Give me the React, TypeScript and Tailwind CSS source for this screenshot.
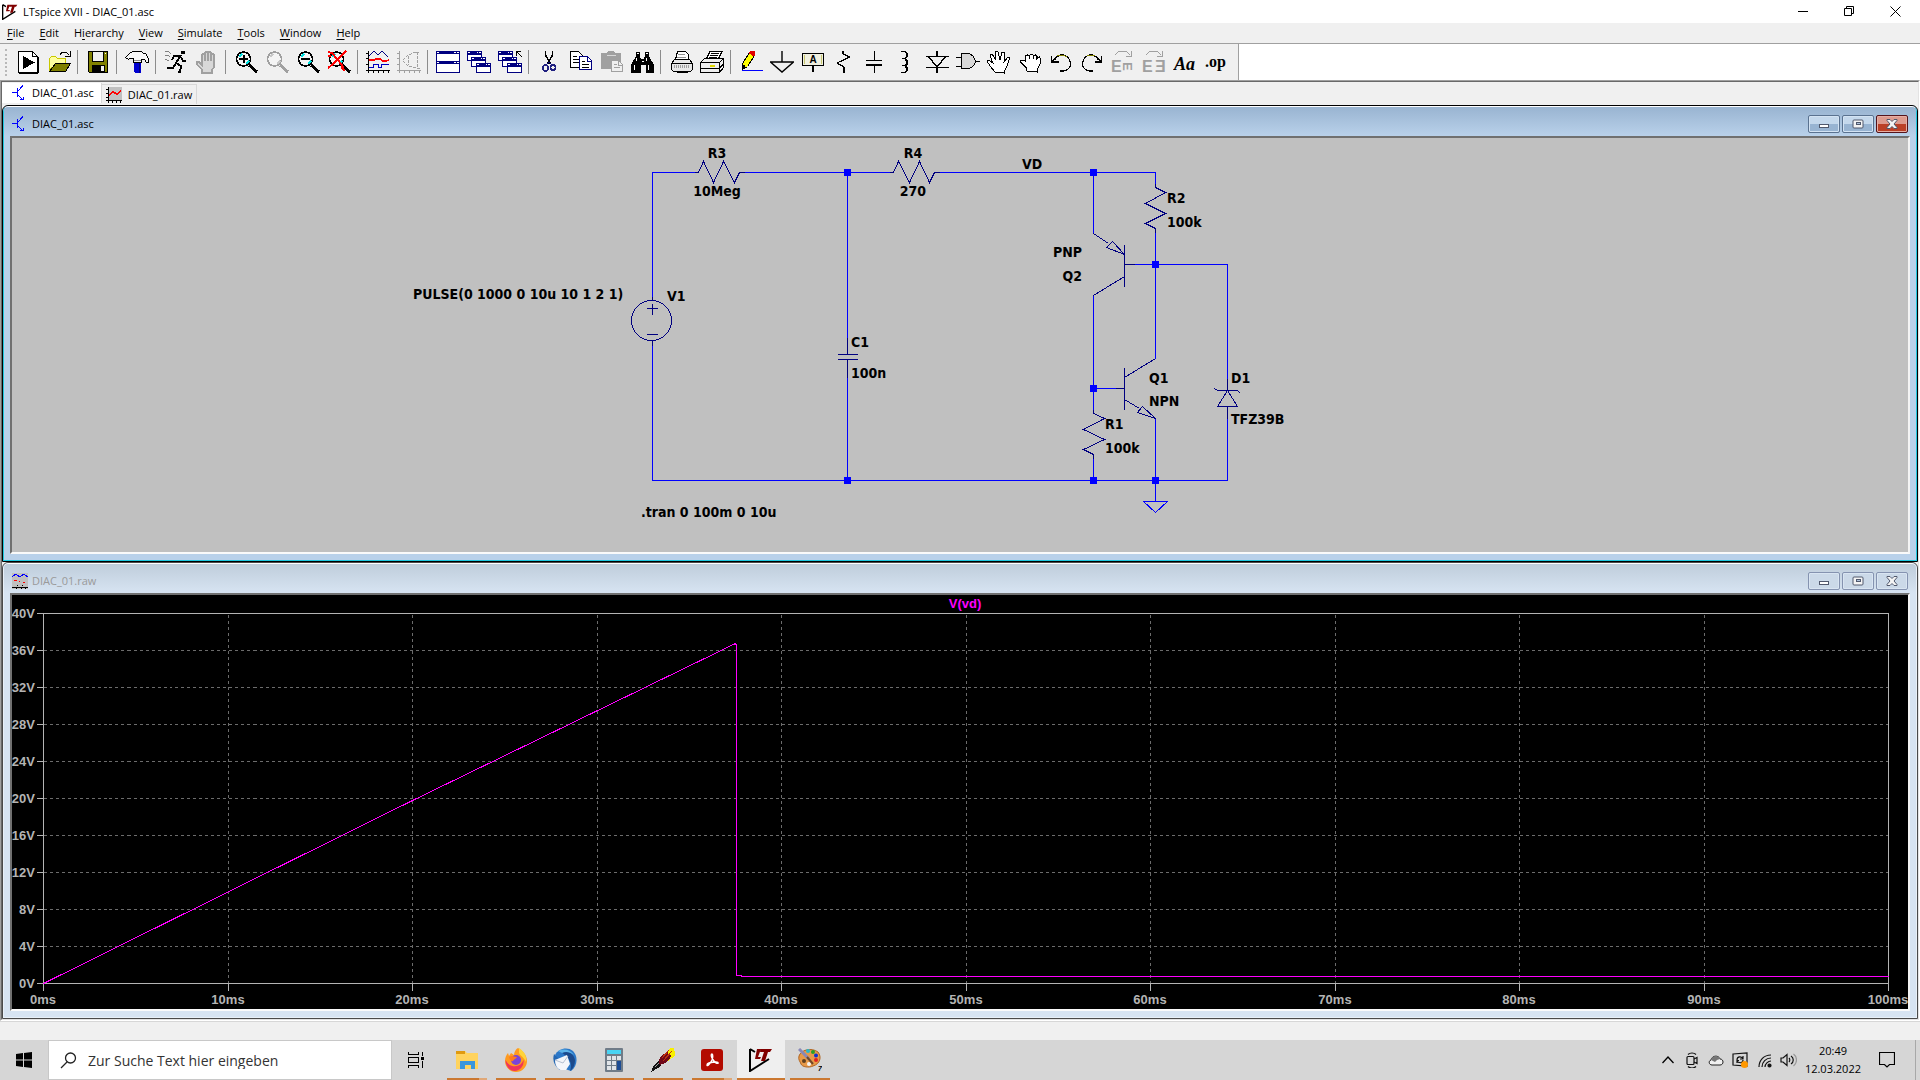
import React, {useState} from 'react';

type IconProps = { children: React.ReactNode };

const Icon: React.FC<IconProps> = ({children}) => (
    <svg viewBox="0 0 24 24" className="w-6 h-6" fill="none" stroke="#000" shapeRendering="crispEdges">
        {children}
    </svg>
);

const Lens: React.FC<{ color: string; glass: string; handle: string }> = ({color, glass, handle}) => (
    <>
        <path d="M15 15l8 7" stroke={handle} strokeWidth="3"/>
        <circle cx="9.5" cy="9" r="7" fill="#f4f4f4" stroke={color} strokeWidth="1.6"/>
        <path d="M5 7l3-3M12 14l3-3" stroke={glass} strokeWidth="2"/>
    </>
);

const MiniWindow: React.FC<{ x: number; y: number }> = ({x, y}) => (
    <>
        <rect x={x + 0.5} y={y + 0.5} width="14" height="9" fill="#fff" stroke="#000080"/>
        <rect x={x} y={y} width="15" height="4" fill="#000080" stroke="none"/>
        <path d={`M${x + 1} ${y + 1.5}h2M${x + 10} ${y + 1.5}h1M${x + 12} ${y + 1.5}h2`} stroke="#fff"/>
    </>
);

const handPath = 'M7 23v-3l-5-6v-2h2l3 3V5l1-1h1l1 1v6V3l1-1h1l1 1v8V3l1-1h1l1 1v8V5l1-1h1l1 1v12l-2 3v3z';

const toolGroups: { label: string; icon: React.ReactNode }[][] = [
    [
        {
            label: 'Run',
            icon: <><path d="M2.5 1.5h14l5 5v16h-19z" fill="#fff"/><path d="M16.5 1.5v5h5M3 23.5h19M22 7v16"/><path d="M7 6v13l12-6.5z" fill="#000" stroke="none"/></>,
        },
        {
            label: 'Open',
            icon: <><path d="M2.5 20V8.5l2-2h4l2 2h8v5h-9z" fill="#ffffa0" stroke="#c8c800"/><path d="M2.5 21.5l6-8h15l-5 8z" fill="#808000"/><path d="M13 5l2-3h4l3 3M23 1v5h-5"/></>,
        },
    ],
    [
        {
            label: 'Save',
            icon: <><path d="M2.5 1.5h19v21h-18l-1-1z" fill="#808000"/><rect x="6.5" y="1.5" width="11" height="10" fill="#efefef"/><rect x="6" y="15" width="13" height="7" fill="#000" stroke="none"/><rect x="15" y="16" width="3" height="5" fill="#efefef" stroke="none"/><path d="M19.5 3v1" stroke="#fff"/></>,
        },
    ],
    [
        {
            label: 'Control Panel',
            icon: <><path d="M9 13h7v9l-1 1h-5l-1-1z" fill="#0000d0" stroke="none"/><path d="M14.5 13v10" stroke="#000080"/><path d="M.5 7.5l5-5 3-1h8l2 2h2l3 5v4h-2l-2-3h-3v3h-8v-4h-4l-1 1z" fill="#f8f8f8"/><path d="M9 10h7" stroke="#909090"/></>,
        },
    ],
    [
        {
            label: 'Simulate',
            icon: <><circle cx="19" cy="2.5" r="1.5" fill="#000"/><path d="M17 5l-5 8 5 3-1 6h-2M12 13l-3 5H3" strokeWidth="2"/><path d="M16 6h-6l-2 4M17 7l2 4h3" strokeWidth="1.5"/><path d="M1 1h3l3 3M1 5h3l2 2M1 9l4 2" stroke="#808080"/></>,
        },
        {label: 'Halt', icon: <path d={handPath} fill="#d8d8d8" stroke="#a0a0a0" strokeWidth="1.5"/>},
    ],
    [
        {label: 'Zoom in', icon: <><Lens color="#000" glass="#00e0e0" handle="#000"/><path d="M9.5 5v8M5 9h9" strokeWidth="2"/></>},
        {label: 'Pan', icon: <Lens color="#a0a0a0" glass="#c8c8c8" handle="#a0a0a0"/>},
        {label: 'Zoom out', icon: <><Lens color="#000" glass="#00e0e0" handle="#000"/><path d="M5 9h9" strokeWidth="2"/></>},
        {
            label: 'Zoom full extents',
            icon: <><Lens color="#000" glass="#00e0e0" handle="#000"/><path d="M1 2l4 1 10 12 2 6M19 1l-4 4-9 9-5 4M1 6h3M14 18h3" stroke="#f00" strokeWidth="2"/></>,
        },
    ],
    [
        {
            label: 'Autorange',
            icon: <><path d="M2.5 1v22M0 20.5h24M0 3.5h2M0 8.5h2M0 14.5h2M7.5 21v2M12.5 21v2M17.5 21v2M22.5 21v2"/><path d="M3 6l5-5 4 4 4-4 6 6" stroke="#000080"/><path d="M3 10h5l2-1h4l3 2h3l3-1" stroke="#f00" strokeWidth="1.5"/><path d="M3 17.5h4v-3h5v3h3v-3h8" stroke="#0000c0"/></>,
        },
        {
            label: 'Smith chart',
            icon: <g stroke="#a0a0a0"><path d="M2.5 1v22M0 20.5h24M0 3.5h2M0 8.5h2M0 14.5h2M7.5 21v2M12.5 21v2M17.5 21v2M22.5 21v2"/><path d="M6 10l5-5 8-3h4M6 11l5 5 8 2h4M20.5 2v16M11.5 6v9" strokeDasharray="3 1"/></g>,
        },
    ],
    [
        {
            label: 'Tile windows',
            icon: <><rect x=".5" y="1.5" width="23" height="10" fill="#fff" stroke="#000080"/><rect x=".5" y="11.5" width="23" height="11" fill="#fff" stroke="#000080"/><path d="M0 2.5h24M0 12.5h24" stroke="#000080" strokeWidth="3"/><path d="M1 2.5h2M18 2.5h2M21 2.5h2M1 12.5h2M18 12.5h2M21 12.5h2" stroke="#fff"/></>,
        },
        {label: 'Cascade windows', icon: <><MiniWindow x={0} y={1}/><MiniWindow x={4} y={7}/><MiniWindow x={9} y={13}/></>},
        {
            label: 'Close all windows',
            icon: <><MiniWindow x={0} y={1}/><MiniWindow x={4} y={7}/><MiniWindow x={9} y={13}/><path d="M17 0h7v8h-4l-3-3z" fill="#f0f0f0" stroke="none"/><path d="M18 1.5h5M18.5 1v5M19 2l5 5"/></>,
        },
    ],
    [
        {
            label: 'Cut',
            icon: <><path d="M8.5 1v4l5 9M15.5 1v4l-5 9" strokeWidth="1.5"/><path d="M12 12l-3 3M12 12l3 3" stroke="#000080"/><ellipse cx="8.5" cy="18" rx="2.5" ry="3" stroke="#202080" strokeWidth="1.6"/><ellipse cx="16" cy="17.5" rx="2.5" ry="3" stroke="#202080" strokeWidth="1.6"/></>,
        },
        {
            label: 'Copy',
            icon: <><path d="M2.5 1.5h8l4 4v12h-12z" fill="#fff"/><path d="M5 6.5h4M5 9.5h6M5 12.5h6"/><path d="M11.5 6.5h8l4 4v9h-12z" fill="#fff" stroke="#000080"/><path d="M19.5 7v4h4" stroke="#000080"/><path d="M14 11.5h3M14 14.5h7M14 17.5h7"/></>,
        },
        {
            label: 'Paste',
            icon: <><path d="M2 3h6l1-2h6l1 2h6v16H2z" fill="#a0a0a0" stroke="none"/><path d="M8 5.5h9" stroke="#d8d8d8"/><path d="M12.5 10.5h7l4 4v7h-11z" fill="#efefef" stroke="#a0a0a0"/><path d="M15 14.5h3M15 17.5h6M19.5 11v4h4" stroke="#a0a0a0"/></>,
        },
        {
            label: 'Find',
            icon: <><path d="M6 2h4v4l1 3h3l1-3V2h4v4l5 9v8h-8v-8h-5v8H1v-8l5-9z" fill="#000" stroke="none"/><path d="M7 3.5h2M16 3.5h2M6.5 8v3M16.5 8v3M4 15v5M18 15v5M12 11.5h2" stroke="#fff"/></>,
        },
    ],
    [
        {
            label: 'Print',
            icon: <><path d="M6.5 9.5l2-8h8l3 3v5" fill="#fff"/><path d="M9 4h7M8 7h9" stroke="#909090"/><path d="M2.5 13.5l3-4h15l3 4v6l-2 2h-17l-2-2z" fill="#e8e8e8"/><path d="M3 13.5h20M8 22.5h11"/><path d="M5 16.5h16" stroke="#a0a0a0" strokeDasharray="1 1" strokeWidth="3"/></>,
        },
        {
            label: 'Print setup',
            icon: <><path d="M6 9.5l4-8h12l-4 8" fill="#fff"/><path d="M11 3.5h8M10 5.5h8M9 7.5h8"/><path d="M.5 12.5l4-4h19v9l-4 5H.5z" fill="#efefef"/><path d="M.5 12.5h19v10M19.5 12.5l4-4M1 18.5h18l4-4"/><path d="M10 15.5h5" stroke="#e0d800" strokeWidth="2"/></>,
        },
    ],
    [
        {
            label: 'Wire',
            icon: <><path d="M3.5 19.5v-6l7-11 5 3-7 11z" fill="#ff0"/><path d="M3 18h2v-3H3z" fill="#000"/><path d="M10 3l2-2h3l1 3-1 2z" fill="#e00000" stroke="#e00000"/><path d="M3 20.5h21" stroke="#00f"/></>,
        },
        {label: 'Ground', icon: <path d="M12 1v11M.5 12h23L12 22z" strokeWidth="1.4" shapeRendering="auto"/>},
        {
            label: 'Label net',
            icon: <><rect x="1.5" y="3.5" width="21" height="12" fill="#f0f0e0" strokeWidth="1.8"/><path d="M3.5 5v9M20.5 5v9" stroke="#c8c870"/><path d="M12 16v6" strokeWidth="1.5"/><text x="12" y="13" textAnchor="middle" fill="#000" stroke="none" className="font-['Liberation_Sans'] text-[10px] font-bold">A</text></>,
        },
        {label: 'Resistor', icon: <path d="M11 1v3l7 3-13 6 7 4v6" strokeWidth="1.2"/>},
        {label: 'Capacitor', icon: <path d="M11.5 1v9M11.5 15v8M3 10.5h16M3 15h16" strokeWidth="1.8"/>},
        {
            label: 'Inductor',
            icon: <path d="M7 1.5h4l2 2v3l-2 2H8M11 9.500l2 1v4l-2 1H8M11 16.500l2 1v3l-2 2H7" strokeWidth="1.5"/>,
        },
        {label: 'Diode', icon: <path d="M12 1v5M12 17v6M1 6.5h23M3 6.5l9 10 9-10M1 17.5h23" strokeWidth="1.4"/>},
        {
            label: 'Component',
            icon: <><path d="M5.5 3.5h7c4 1 6 4 7 8-1 4-3 6-7 7h-7z" fill="#d8d8d8"/><path d="M0 7.5h5M0 16.5h5M20 11.5h4" strokeWidth="1.6"/></>,
        },
        {
            label: 'Move',
            icon: <path d="M8 22l-5-6-3-5 2-1 4 3-3-7V4h2l4 6-1-8 2-1 1 1 2 8 2-8h2l1 1-1 9 4-5h2l-3 9-3 6v1z" fill="#fff"/>,
        },
        {
            label: 'Drag',
            icon: <path d="M8.5 21v-3l-6-6v-2h2l3 1V6l2-1 2 1 1-2h2l1 2 2-1 2 2v1l2-1 1 2v4l-3 6v3zM11.5 6v3M15.500 6v3M18.500 7v3" fill="#fff"/>,
        },
        {label: 'Undo', icon: <><path d="M6 10c2-6 10-7 14-1 4 7-1 13-9 12" strokeWidth="1.3"/><path d="M8 5h6l4 2" stroke="#808000"/><path d="M2.5 6v6h7M3 11l4-3" strokeWidth="1.5"/></>},
        {label: 'Redo', icon: <><path d="M18 10C16 4 8 3 4 9c-4 7 1 13 9 12" strokeWidth="1.3"/><path d="M7 6l4-1h4" stroke="#808000"/><path d="M21.5 6v6h-7M21 11l-4-3" strokeWidth="1.5"/></>},
        {
            label: 'Rotate',
            icon: <g fill="#a0a0a0" stroke="none" className="font-['Liberation_Sans'] text-[16px] font-bold"><text x="0" y="22">E</text><text transform="translate(12 12) rotate(90)" x="0" y="0" className="text-[13px]">E</text><path d="M4 5l4-4h7l4 4M20 1v5h-5" fill="none" stroke="#a0a0a0"/></g>,
        },
        {
            label: 'Mirror',
            icon: <g fill="#a0a0a0" stroke="none" className="font-['Liberation_Sans'] text-[16px] font-bold"><text x="0" y="22">E</text><text x="13" y="22">Ǝ</text><path d="M4 5l4-4h7l4 4M20 1v5h-5" fill="none" stroke="#a0a0a0"/></g>,
        },
        {
            label: 'Text',
            icon: <text x="1" y="20" fill="#000" stroke="none" className="font-['Liberation_Serif'] text-[18px] font-bold italic">Aa</text>,
        },
        {
            label: 'SPICE directive',
            icon: <text x="1" y="17" fill="#000" stroke="none" className="font-['Liberation_Serif'] text-[16px] font-bold">.op</text>,
        },
    ],
];

const menus = ['File', 'Edit', 'Hierarchy', 'View', 'Simulate', 'Tools', 'Window', 'Help'];
// index of the underlined access key
const accessKey: Record<string, number> = {Hierarchy: 1};

const LtLogo: React.FC<{ className: string }> = ({className}) => (
    <svg viewBox="0 0 24 24" className={className} fill="none">
        <path d="M1 1v22l19-12M1 1l5 3" stroke="#000" strokeWidth="2"/>
        <path d="M8 1l-2 10h5l1-2H9l3-8zM12 1l-1 3h4l-3 9h4l3-9h2l2-3z" fill="#800000"/>
    </svg>
);

const TransistorIcon = () => (
    <svg viewBox="0 0 16 16" className="w-4 h-4" fill="none" stroke="#00f" shapeRendering="crispEdges">
        <path d="M0 7.5h5M10.5 0v1L6 6M6 10l4 4"/>
        <path d="M5.500 3v9" strokeWidth="1.5"/>
        <path d="M8 14.500h3v-3" />
    </svg>
);

const PlotTabIcon = () => (
    <svg viewBox="0 0 16 16" className="w-4 h-4" fill="none" shapeRendering="crispEdges">
        <path d="M2 0h14v13H2z" fill="#c0c0c0"/>
        <path d="M2.5 0v16M0 13.5h16M0 2.5h2M0 6.5h2M0 10.5h2M6.5 14v2M10.5 14v2M14.5 14v2" stroke="#000"/>
        <path d="M3 8l4-3 4 2 4-3" stroke="#f00" strokeWidth="1.5"/>
    </svg>
);

const PlotCaptionIcon = () => (
    <svg viewBox="0 0 16 16" className="w-4 h-4" fill="none" shapeRendering="crispEdges">
        <path d="M0 0h16v16H0z" fill="#c0c0c0"/>
        <path d="M0 4l4-3 4 3 4-3 4 3" stroke="#00f"/>
        <path d="M2 7.5h3M7 8.5h1M11 9.5h2" stroke="#f00"/>
        <path d="M0 14.5h16M5 12.5h1M10 12.5h1M4.5 15v1M9.5 15v1M13.5 15v1" stroke="#000"/>
    </svg>
);

type ChildWindowProps = {
    title: string;
    icon: React.ReactNode;
    active?: boolean;
    children: React.ReactNode;
};

const ChildWindow: React.FC<ChildWindowProps> = ({title, icon, active, children}) => {
    const button = active
        ? 'border-[#5a7290] bg-linear-to-b from-[#c4d8ec] from-50% to-[#98b4d2] to-50% shadow-[inset_0_0_0_1px_#d3e3f3]'
        : 'border-[#8593b0] bg-[#cbd9e8] shadow-[inset_0_0_0_1px_#d9e5f2]';
    const close = active
        ? 'border-[#54141c] bg-linear-to-b from-[#dd9a8e] from-50% to-[#bb4027] to-50% shadow-[inset_0_0_0_1px_#e6aea4]'
        : 'border-[#8593b0] bg-[#cbd9e8] shadow-[inset_0_0_0_1px_#d9e5f2]';

    return (
        <section className={`rounded-t-md border ${active ? 'border-black bg-[#b9d1ea]' : 'border-[#4a4a4a] bg-[#d7e4f2]'}`}>
            <div className={`rounded-t-md border border-t-white ${active ? 'border-[#1fc8e0]' : 'border-[#e8f0f8]'}`}>
                <header
                    className={`flex h-[29px] items-center gap-1 rounded-t pr-2 pl-1.5 bg-linear-to-b ${active ? 'from-[#99b4d1] to-[#b9d1ea]' : 'from-[#bfcddb] to-[#d7e4f2]'}`}>
                    <span className="pt-1 pl-0.5">{icon}</span>
                    <h2 className={`flex-1 pt-1 text-[11px] ${active ? 'text-black' : 'text-[#9a9a9a]'}`}>{title}</h2>
                    <div className="flex gap-0.5 pt-1">
                        <button aria-label="Minimize" className={`flex h-[18px] w-8 items-center justify-center rounded-xs border ${button}`}>
                            <svg viewBox="0 0 12 10" className="h-2.5 w-3"><rect x="1.5" y="5.5" width="9" height="3" fill="#fff" stroke="#50586c"/></svg>
                        </button>
                        <button aria-label="Maximize" className={`flex h-[18px] w-8 items-center justify-center rounded-xs border ${button}`}>
                            <svg viewBox="0 0 12 10" className="h-2.5 w-3"><rect x="1" y="1" width="10" height="8" rx="1" fill="#f4f4f4" stroke="#50586c"/><rect x="4.5" y="3.5" width="4" height="2" fill="#b0c4dc" stroke="#50586c"/></svg>
                        </button>
                        <button aria-label="Close" className={`flex h-[18px] w-8 items-center justify-center rounded-xs border ${close}`}>
                            <svg viewBox="0 0 12 10" className="h-2.5 w-3"><path d="M1 .5h3l2 2 2-2h3v1L8 5l3 3.5v1H8l-2-2-2 2H1v-1L4 5 1 1.5z" fill="#f4f4f4" stroke="#50586c"/></svg>
                        </button>
                    </div>
                </header>
                <div className="px-1.5 pb-1.5">
                    <div className="border-2 border-t-[#707070] border-r-[#f4f4f4] border-b-[#fafafa] border-l-[#707070]">
                        {children}
                    </div>
                </div>
            </div>
        </section>
    );
};

const junctions = [[847, 172], [1093, 172], [1155, 264], [1093, 388], [847, 480], [1093, 480], [1155, 480]];

const schematicText: { x: number; y: number; text: string; anchor?: 'middle' | 'end' }[] = [
    {x: 717, y: 158, text: 'R3', anchor: 'middle'},
    {x: 717, y: 196, text: '10Meg', anchor: 'middle'},
    {x: 913, y: 158, text: 'R4', anchor: 'middle'},
    {x: 913, y: 196, text: '270', anchor: 'middle'},
    {x: 1032, y: 169, text: 'VD', anchor: 'middle'},
    {x: 413, y: 299, text: 'PULSE(0 1000 0 10u 10 1 2 1)'},
    {x: 667, y: 301, text: 'V1'},
    {x: 851, y: 347, text: 'C1'},
    {x: 851, y: 378, text: '100n'},
    {x: 641, y: 517, text: '.tran 0 100m 0 10u'},
    {x: 1167, y: 203, text: 'R2'},
    {x: 1167, y: 227, text: '100k'},
    {x: 1082, y: 257, text: 'PNP', anchor: 'end'},
    {x: 1082, y: 281, text: 'Q2', anchor: 'end'},
    {x: 1149, y: 383, text: 'Q1'},
    {x: 1149, y: 406, text: 'NPN'},
    {x: 1231, y: 383, text: 'D1'},
    {x: 1231, y: 424, text: 'TFZ39B'},
    {x: 1105, y: 429, text: 'R1'},
    {x: 1105, y: 453, text: '100k'},
];

const Schematic = () => (
    <svg viewBox="12 138 1896 414" className="block h-auto w-full bg-[#c0c0c0]" role="img" aria-label="Schematic">
        <g transform="translate(.5 .5)" fill="none" shapeRendering="crispEdges">
            {/* wires */}
            <path
                stroke="#00f"
                d="M652 296V172H694M744 172H889M939 172H1155V183M652 345V480H1227V418M847 172V337M847 377V480M1093 172V233M1155 232V358M1134 264H1227V378M1093 295V409M1093 388H1115M1155 418V501M1093 458V480M1143 501H1167L1155 512Z"
            />
            {/* component symbols */}
            <g stroke="#000080">
                <path d="M694 172h4l5-11 10 21 10-21 11 21 5-10h5"/>
                <path d="M889 172h4l5-11 11 21 10-21 10 21 5-10h5"/>
                <circle cx="651" cy="320" r="20"/>
                <path d="M652 296v4M652 340v5M646 308h11M652 303v11M646 334h11"/>
                <path d="M847 337v17M837 354h20M837 359h20M847 359v18"/>
                <path d="M1155 183v4l10 5-20 11 20 10-20 10 10 5v4"/>
                <path d="M1093 233l15 10M1124 254l-12-13-6 6zM1124 244v42M1124 264h10M1124 276l-31 19"/>
                <path d="M1115 388h9M1124 367v42M1124 377l31-19M1124 399l15 9M1155 418l-13-12-5 6z"/>
                <path d="M1093 409v4l11 5-21 11 21 10-21 10 10 5v4"/>
                <path d="M1227 378v12M1214 388l3 2h20l3 3M1227 390l-10 16h20zM1227 406v12"/>
            </g>
        </g>
        {junctions.map(([x, y]) => (
            <rect key={`${x}-${y}`} x={x - 3} y={y - 3} width="7" height="7" fill="#00f"/>
        ))}
        <g className="font-['DejaVu_Sans_Condensed','DejaVu_Sans',sans-serif] text-[14px] font-bold">
            {schematicText.map((t) => (
                <text key={`${t.x}-${t.y}`} x={t.x} y={t.y} textAnchor={t.anchor}>{t.text}</text>
            ))}
        </g>
    </svg>
);

const xTicks = [43, 228, 412, 597, 781, 966, 1150, 1335, 1519, 1704, 1888];

const Waveform = () => (
    <svg viewBox="12 595 1896 414" className="block h-auto w-full bg-black font-['Liberation_Sans',Arial,sans-serif] text-[13px] font-bold" role="img" aria-label="V(vd)">
        <g transform="translate(.5 .5)" fill="none" shapeRendering="crispEdges">
            <g stroke="#6c6c6c" strokeDasharray="3 3">
                {xTicks.slice(1, -1).map((x) => <path key={x} d={`M${x} 614V983`}/>)}
                {xTicks.slice(1, -1).map((_, i) => <path key={i} d={`M43 ${650 + i * 37}H1888`}/>)}
            </g>
            <g stroke="#b4b4b4">
                <rect x="43" y="613" width="1845" height="370"/>
                {xTicks.map((x) => <path key={x} d={`M${x} 983v7`}/>)}
                {xTicks.map((_, i) => <path key={i} d={`M36 ${613 + i * 37}h7`}/>)}
            </g>
            <path d="M43 983L412 800L735 643L736 645V975H741V976H1888" stroke="#f0f"/>
        </g>
        <g fill="#b4b4b4">
            {xTicks.map((_, i) => (
                <text key={i} x="35" y={618 + i * 37} textAnchor="end">{40 - i * 4}V</text>
            ))}
            {xTicks.map((x, i) => (
                <text key={x} x={x} y="1004" textAnchor="middle">{i * 10}ms</text>
            ))}
        </g>
        <text x="965" y="608" textAnchor="middle" fill="#f0f">V(vd)</text>
    </svg>
);

const taskbarApps: { label: string; active?: boolean; stacked?: boolean; icon: React.ReactNode }[] = [
    {
        label: 'Explorer',
        stacked: true,
        icon: <svg viewBox="0 0 24 24" className="w-6 h-6"><path d="M1 3h9l2 2h11v16H1z" fill="#ffd35e"/><path d="M1 3h9v3H1z" fill="#e09a10"/><path d="M5 21v-8h15v8h-4v-4h-6v4z" fill="#3a96dd"/></svg>,
    },
    {
        label: 'Firefox',
        icon: <svg viewBox="0 0 24 24" className="w-6 h-6"><path d="M14 0c4 2 9 7 9 13a11 11 0 0 1-22 0c0-3 1-6 3-8l1 3 2-3 3 2c0-3 2-6 4-7z" fill="#ff9a1f"/><path d="M1.500 12c2 3 3 5 7 6 5 1 9-1 11-6a9.5 9.5 0 0 1-9 11c-5 0-9-5-9-11z" fill="#f0365a"/><path d="M15 0c6 4 8 9 7 14-2-5-6-6-7-9z" fill="#ffd43a"/><circle cx="12" cy="12" r="5" fill="#7a45d8"/><path d="M5 9c3-2 5 0 8 0-1 2-3 2-4 4-1 1-3 0-4-4z" fill="#ff7a20"/></svg>,
    },
    {
        label: 'Thunderbird',
        icon: <svg viewBox="0 0 24 24" className="w-6 h-6"><path d="M2 7C5 1 14-2 20 3c5 5 5 15-2 20l-9-3z" fill="#2c78c8"/><path d="M8 4c6-2 13 1 14 8 0 5-2 9-5 11 2-5 1-9-2-13-2-3-5-4-7-6z" fill="#1c4a8c"/><path d="M5 3c6-3 13-1 16 4-4-3-8-4-12-2z" fill="#5cb4ea"/><path d="M1 6c-2 7 1 13 6 16l2-8z" fill="#2468b4"/><path d="M2 12l12-5 3 9-4 6H8c-4-1-6-5-6-10z" fill="#f4f6fa"/><path d="M2 12l8 3 5-7" stroke="#b4c0d0" fill="none"/></svg>,
    },
    {
        label: 'Rechner',
        icon: <svg viewBox="0 0 24 24" className="w-6 h-6"><rect x="3" y="0" width="18" height="24" rx="1" fill="#707c88"/><rect x="5" y="2" width="14" height="4" fill="#48d4f4"/><path d="M5 8h4v4H5zM10 8h4v4h-4zM15 8h4v4h-4zM5 13h4v4H5zM10 13h4v4h-4zM5 18h4v4H5zM10 18h4v4h-4z" fill="#e0e4e8"/><path d="M15 13h4v9h-4z" fill="#1c4c94"/></svg>,
    },
    {
        label: 'Feder',
        icon: <svg viewBox="0 0 24 24" className="w-6 h-6" shapeRendering="crispEdges"><path d="M13 6l6-6h4v3h1v5l-7 5z" fill="#f8f000"/><path d="M0 24l3-7 5-5 3 3-2 4z" fill="#111"/><path d="M4 19l4-4" stroke="#a0a0a0"/><path d="M8 14l1-5 7-5 1-1v4l3 0-1 4-5 4-5 2z" fill="#700818"/><path d="M12 13l9-10M11 10l7-8" stroke="#c03010"/></svg>,
    },
    {
        label: 'Acrobat',
        stacked: true,
        icon: <svg viewBox="0 0 24 24" className="w-6 h-6"><rect x="1" y="1" width="22" height="22" rx="3" fill="#b30b00"/><path d="M12 6c-2 0 0 6 4 9 3 1 3-1 0-1-4 0-9 1-9 3s3-1 5-5c1-3 1-6 0-6z" fill="none" stroke="#fff" strokeWidth="1.4"/></svg>,
    },
    {label: 'LTspice', active: true, icon: <LtLogo className="w-6 h-6"/>},
    {
        label: 'Paint',
        icon: <svg viewBox="0 0 24 24" className="w-6 h-6"><path d="M1 8c2-6 12-9 19-4 4 5 2 12-5 14-4 2-11 1-12-2-1-3-3-4-2-8z" fill="#e89a48" stroke="#b06420"/><circle cx="10" cy="3" r="2" fill="#28b8d0"/><circle cx="15" cy="4" r="2" fill="#28a028"/><circle cx="18" cy="7.5" r="2" fill="#1030d0"/><circle cx="18" cy="12" r="2" fill="#e02020"/><circle cx="11" cy="16" r="2" fill="#f4f4f4"/><circle cx="6" cy="13" r="2" fill="#604020"/><path d="M1 1l10 10" stroke="#8888b8" strokeWidth="3"/><path d="M9 9l6 7" stroke="#704828" strokeWidth="2"/><text x="20" y="23" className="font-['Liberation_Sans'] text-[7px] font-bold italic">7</text></svg>,
    },
];

const App: React.FC = () => {
    const [tab, setTab] = useState('asc');
    const [search, setSearch] = useState('');

    return (
        <div className="flex min-h-screen flex-col bg-[#f0f0f0] font-['Open_Sans','Noto_Sans',sans-serif] text-[11px] leading-4 text-black">
            {/* Title bar */}
            <header className="flex h-[23px] items-center bg-white px-0.5">
                <LtLogo className="w-4 h-4"/>
                <h1 className="flex-1 pl-[5px] text-[11px]">LTspice XVII - DIAC_01.asc</h1>
                <button aria-label="Minimieren" className="flex w-[46px] justify-center">
                    <svg viewBox="0 0 11 11" className="h-[11px] w-[11px]" stroke="#000"><path d="M0 5.5h10"/></svg>
                </button>
                <button aria-label="Verkleinern" className="flex w-[46px] justify-center">
                    <svg viewBox="0 0 11 11" className="h-[11px] w-[11px]" stroke="#000" fill="none"><path d="M.5 2.5h7v7h-7zM2.5 2.5v-2h7v7h-2"/></svg>
                </button>
                <button aria-label="Schließen" className="flex w-[46px] justify-center">
                    <svg viewBox="0 0 11 11" className="h-[11px] w-[11px]" stroke="#000"><path d="M.5.5l10 10M10.500.5l-10 10"/></svg>
                </button>
            </header>

            {/* Menu */}
            <nav className="flex h-[21px] items-center gap-px border-b border-[#a0a0a0]">
                {menus.map((name) => {
                    const key = accessKey[name] ?? 0;
                    return (
                        <button key={name} className="px-[7px]">
                            {name.slice(0, key)}<u className="underline-offset-2">{name[key]}</u>{name.slice(key + 1)}
                        </button>
                    );
                })}
            </nav>

            {/* Toolbar */}
            <div className="flex h-9 bg-white">
                <div className="flex items-center border-r border-[#a0a0a0] bg-[#f0f0f0] pr-[7px]" role="toolbar">
                    <div className="mr-1 ml-[5px] h-[27px] w-[3px] border-l-2 border-dotted border-[#b8b8b8]"/>
                    {toolGroups.map((group, i) => (
                        <React.Fragment key={i}>
                            {i > 0 && <div className="mr-1 ml-[3px] h-6 w-px bg-[#8c8c8c]"/>}
                            {group.map((tool) => (
                                <button key={tool.label} aria-label={tool.label} className="w-[31px] pl-1">
                                    <Icon>{tool.icon}</Icon>
                                </button>
                            ))}
                        </React.Fragment>
                    ))}
                </div>
            </div>

            {/* MDI area */}
            <main className="flex-1 border border-t-[#a0a0a0] border-r-white border-b-white border-l-[#a0a0a0]">
                <div className="h-full border border-t-[#696969] border-r-[#e3e3e3] border-b-[#e3e3e3] border-l-[#696969]">
                    <div className="flex h-[23px] items-start pt-px" role="tablist">
                        <button
                            role="tab"
                            aria-selected={tab === 'asc'}
                            onClick={() => setTab('asc')}
                            className="flex h-5 items-center gap-1 border-r border-[#d8d8d8] bg-white pr-[7px] pl-2.5"
                        >
                            <TransistorIcon/>
                            DIAC_01.asc
                        </button>
                        <button
                            role="tab"
                            aria-selected={tab === 'raw'}
                            onClick={() => setTab('raw')}
                            className="mt-px flex h-5 items-center gap-1.5 border-t border-r border-[#d8d8d8] pr-1 pl-1"
                        >
                            <PlotTabIcon/>
                            DIAC_01.raw
                        </button>
                    </div>
                    <ChildWindow title="DIAC_01.asc" icon={<TransistorIcon/>} active>
                        <Schematic/>
                    </ChildWindow>
                    <ChildWindow title="DIAC_01.raw" icon={<PlotCaptionIcon/>}>
                        <Waveform/>
                    </ChildWindow>
                </div>
            </main>

            {/* Status bar */}
            <div className="h-[19px] border-t border-[#d7d7d7] bg-[#f0f0f0]"/>

            {/* Taskbar */}
            <footer className="flex h-10 items-stretch bg-[#d6d6d6]">
                <button aria-label="Start" className="flex w-12 items-center justify-center">
                    <svg viewBox="0 0 16 16" className="w-4 h-4"><path d="M0 2l7-1v6.5H0zM8 1l8-1v7.5H8zM0 8.5h7V15l-7-1zM8 8.5h8V16l-8-1z"/></svg>
                </button>
                <label className="flex w-[344px] items-center gap-[11px] border border-[#c8c8c8] bg-white px-[11px]">
                    <svg viewBox="0 0 17 17" className="h-[17px] w-[17px]" fill="none" stroke="#222" strokeWidth="1.3"><circle cx="10.5" cy="6" r="5"/><path d="M7 10l-6 6"/></svg>
                    <input
                        value={search}
                        onChange={(e) => setSearch(e.target.value)}
                        placeholder="Zur Suche Text hier eingeben"
                        aria-label="Suche"
                        className="min-w-0 flex-1 pt-0.5 text-[14px] outline-none placeholder:text-[#333]"
                    />
                </label>
                <button aria-label="Aktive Anwendungen" className="mr-[3px] flex w-12 items-center justify-center">
                    <svg viewBox="0 0 16 16" className="w-4 h-4" fill="none" stroke="#000" shapeRendering="crispEdges"><path d="M.5 0v2.5h10V0M.5 16v-2.500h10V16M.5 5.5h10v5H.5zM14.5 0v4M14.5 9v7"/><path d="M13 6.5h3" strokeWidth="3"/></svg>
                </button>
                <div className="flex gap-px">
                    {taskbarApps.map((app) => (
                        <button key={app.label} aria-label={app.label} className={`flex w-12 flex-col items-center ${app.active ? 'bg-[#efefef]' : ''}`}>
                            <span className="flex h-[38px] items-center pt-0.5">{app.icon}</span>
                            <span className={`flex h-0.5 bg-[#cb7830] ${app.active ? 'w-12' : 'w-10'}`}>
                                {app.stacked && <span className="ml-auto w-2 bg-[#e0a878]"/>}
                            </span>
                        </button>
                    ))}
                </div>
                <div className="ml-auto flex items-center">
                    <button aria-label="Ausgeblendete Symbole" className="mr-3">
                        <svg viewBox="0 0 12 16" className="h-4 w-3" fill="none" stroke="#000" strokeWidth="1.3"><path d="M.5 11L6 5l5.500 6"/></svg>
                    </button>
                    <svg viewBox="0 0 12 16" className="mr-2.5 h-4 w-3" fill="none" stroke="#111" strokeWidth="1.2"><rect x="1" y="4.5" width="7" height="8" rx="1"/><path d="M8 7l3-1.500v6L8 10M2 2.500c2-2 6-2 8 0M2 14.500c2 2 6 2 8 0"/></svg>
                    <svg viewBox="0 0 16 16" className="mr-2 w-4 h-4" stroke="#222"><path d="M4 13C1 13 0 9 3 8c1-5 8-5 9-1 4 0 4 6 0 6z" fill="#f0f0f0"/><path d="M3 8c1-5 8-5 9-1l-3 1-2 2z" fill="#777" stroke="none"/></svg>
                    <svg viewBox="0 0 16 16" className="mr-2.5 w-4 h-4" fill="none" stroke="#111" strokeWidth="1.2"><path d="M1 2l14-1v13L1 13z"/><path d="M5 8c0-4 5-4 6-1M11 4v3H8M11 8c0 4-5 3-6 1M5 11V8.500h2"/><circle cx="12.5" cy="12.5" r="3.5" fill="#ff9800" stroke="none"/></svg>
                    <svg viewBox="0 0 14 16" className="mr-2 h-4 w-3.5" fill="none" stroke="#111" strokeWidth="1.2"><path d="M1 15C1 8 6 3 13 3M4 15c0-5 4-9 9-9M7 15c0-3 3-6 6-6"/><circle cx="11.5" cy="13.5" r="1.5" fill="#111"/></svg>
                    <svg viewBox="0 0 17 16" className="mr-2 h-4 w-[17px]" fill="none" stroke="#111" strokeWidth="1.2"><path d="M1 6h2l4-3.500v11L3 10H1zM9 6c1 1 1 3 0 4M11 4c3 2 3 6 0 8"/><path d="M13.500 2c4 3 4 9 0 12" stroke="#999"/></svg>
                    <time className="text-center text-[11px] leading-[18px]">20:49<br/>12.03.2022</time>
                    <button aria-label="Benachrichtigungen" className="ml-[18px] pr-5">
                        <svg viewBox="0 0 16 16" className="w-4 h-4" fill="none" stroke="#000" strokeWidth="1.2"><path d="M.5.5h15v12h-5L8 15l-2.500-2.500h-5z"/></svg>
                    </button>
                    <div className="mr-1 h-10 w-px bg-[#a8a8a8]"/>
                </div>
            </footer>
        </div>
    );
};

export default App;
